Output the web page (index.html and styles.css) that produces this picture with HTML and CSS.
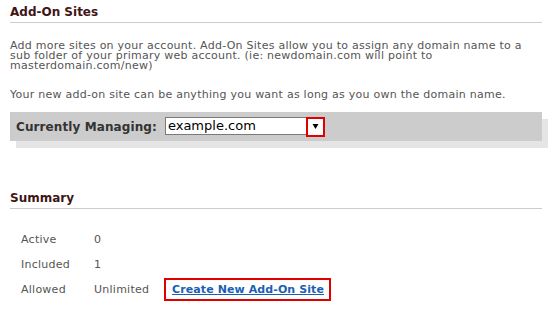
FILE: index.html
```html
<!DOCTYPE html>
<html lang="en">
<head>
<meta charset="utf-8">
<title>Add-On Sites</title>
<link rel="stylesheet" href="styles.css">
</head>
<body>
<div class="page">
  <section class="panel">
    <h2 class="panel-title">Add-On Sites</h2>
    <p class="intro">Add more sites on your account. Add-On Sites allow you to assign any domain name to a sub folder of your primary web account. (ie: newdomain.com will point to masterdomain.com/new)</p>
    <p class="intro">Your new add-on site can be anything you want as long as you own the domain name.</p>
    <div class="managing">
      <span class="managing-label">Currently Managing:</span>
      <div class="domain-select">
        <span class="domain-value">example.com</span>
        <span class="select-arrow">
          <svg width="7" height="7" viewBox="0 0 7 7"><polygon points="0.5,1 6.5,1 3.5,6" fill="#000"/></svg>
        </span>
      </div>
    </div>
  </section>

  <section class="panel summary">
    <h2 class="panel-title">Summary</h2>
    <div class="summary-grid">
      <span class="summary-label">Active</span>
      <span class="summary-value">0</span>
      <span class="summary-extra"></span>

      <span class="summary-label">Included</span>
      <span class="summary-value">1</span>
      <span class="summary-extra"></span>

      <span class="summary-label">Allowed</span>
      <span class="summary-value">Unlimited</span>
      <span class="summary-extra"><a class="create-link" href="#">Create New Add-On Site</a></span>
    </div>
  </section>
</div>
</body>
</html>
```

FILE: styles.css
```css
html, body {
  margin: 0;
  padding: 0;
  background: #ffffff;
}

body {
  font-family: "DejaVu Sans", Verdana, sans-serif;
  font-size: 11px;
  letter-spacing: 0.25px;
  color: #555555;
}

.page {
  padding: 5px 13px 0 10px;
}

.panel-title {
  margin: 0;
  font-size: 12px;
  letter-spacing: 0;
  line-height: 15px;
  font-weight: bold;
  color: #401515;
  padding-bottom: 2px;
  border-bottom: 1px solid #cccccc;
}

.intro {
  margin: 18px 0 0 0;
  line-height: 10px;
}

.intro + .intro {
  margin-top: 19px;
}

.managing {
  margin-top: 12px;
  height: 29px;
  background: #cccccc;
  box-shadow: 6px 7px 0 #e5e5e5;
  display: flex;
  align-items: center;
  padding-left: 6px;
}

.managing-label {
  font-size: 12px;
  letter-spacing: 0.1px;
  font-weight: bold;
  color: #333333;
  margin-right: 8px;
}

.domain-select {
  width: 158px;
  height: 16px;
  background: #ffffff;
  border: 1px solid #7a7a7a;
  display: flex;
  align-items: center;
  justify-content: space-between;
  margin-top: -1px;
}

.domain-value {
  font-size: 13px;
  letter-spacing: 0;
  color: #000000;
  padding-left: 2px;
  line-height: 16px;
}

.select-arrow {
  width: 15px;
  height: 16px;
  border: 2px solid #e00000;
  margin: -1px -1px -2px 0;
  display: flex;
  align-items: center;
  justify-content: center;
  background: #ffffff;
}

.select-arrow svg {
  display: block;
}

.summary {
  margin-top: 50px;
}

.summary-grid {
  display: grid;
  grid-template-columns: 73px 70px auto;
  grid-auto-rows: 25px;
  align-items: center;
  padding: 18px 0 0 11px;
}

.summary-label,
.summary-value {
  line-height: 12px;
}

.create-link {
  display: inline-block;
  font-weight: bold;
  letter-spacing: 0.1px;
  color: #1a5fb4;
  text-decoration: underline;
  border: 2px solid #e00000;
  padding: 4px 5px 4px 6px;
  line-height: 11px;
}
```
